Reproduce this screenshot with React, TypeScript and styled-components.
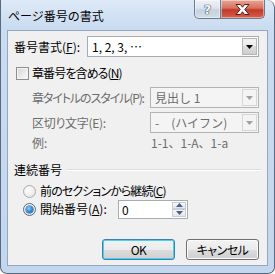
import React from 'react';
import styled, { createGlobalStyle } from 'styled-components';

const Global = createGlobalStyle`
  html, body { margin: 0; padding: 0; background: #ffffff; }
  body {
    font-family: "Noto Sans CJK JP", "Noto Sans", sans-serif;
    font-size: 12px;
    color: #000;
  }
`;

const Window = styled.div`
  width: 275px;
  height: 274px;
  box-sizing: border-box;
  background: linear-gradient(180deg, #dde9f6 0px, #cadcf1 28px, #c2d6ee 100%);
  border: 1px solid #5a6a7e;
  border-top: none;
  border-radius: 0 8px 7px 7px;
  display: flex;
  flex-direction: column;
  padding: 0 6px 7px 6px;
  overflow: hidden;
`;

const TitleBar = styled.div`
  height: 30px;
  display: flex;
  align-items: flex-start;
  flex: none;
`;

const Title = styled.div`
  font-size: 12px;
  line-height: 16px;
  margin: 8px 0 0 1px;
  color: #000;
`;

const Captions = styled.div`
  margin-left: auto;
  margin-right: 3px;
  display: flex;
`;

const CaptionButton = styled.div<{ $close?: boolean }>`
  height: 19px;
  width: ${p => (p.$close ? '44px' : '27px')};
  box-sizing: border-box;
  border: 1px solid #6d7a8c;
  border-top: none;
  display: flex;
  align-items: center;
  justify-content: center;
  border-radius: ${p => (p.$close ? '0 0 5px 0' : '0 0 0 5px')};
  border-left: ${p => (p.$close ? 'none' : '1px solid #6d7a8c')};
  background: ${p =>
    p.$close
      ? 'linear-gradient(180deg, #e9a596 0%, #d7705f 45%, #c3392a 55%, #d65f4c 100%)'
      : 'linear-gradient(180deg, #eef2f7 0%, #dce4ee 45%, #c6d2e0 55%, #d3dde9 100%)'};
  box-shadow: inset 0 0 0 1px rgba(255,255,255,0.45);
`;

const HelpGlyph = styled.span`
  font-family: "DejaVu Sans", sans-serif;
  font-weight: bold;
  font-size: 13px;
  line-height: 13px;
  color: #f6f8fb;
  text-shadow: 0 0 1px #3c4a5c, 0 0 1px #3c4a5c, 0 0 1px #3c4a5c;
`;

const Client = styled.div`
  flex: 1;
  background: #f0f0f0;
  border: 1px solid #95a8c0;
  display: flex;
  flex-direction: column;
  padding: 5px 8px 5px 6px;
`;

const Row = styled.div<{ $top?: number; $h?: number; $indent?: number }>`
  display: flex;
  align-items: center;
  height: ${p => p.$h ?? 21}px;
  margin-top: ${p => p.$top ?? 0}px;
  padding-left: ${p => p.$indent ?? 0}px;
`;

const Label = styled.span<{ $w?: number; $disabled?: boolean; $ls?: number }>`
  font-feature-settings: "palt";
  line-height: 16px;
  white-space: nowrap;
  letter-spacing: ${p => p.$ls ?? 0}px;
  width: ${p => (p.$w ? `${p.$w}px` : 'auto')};
  flex: none;
  color: ${p => (p.$disabled ? '#6d6d6d' : '#000')};
`;

const Acc = styled.span`
  text-decoration: underline;
  text-underline-offset: 1px;
`;

const Combo = styled.div<{ $disabled?: boolean; $w?: number }>`
  margin-left: auto;
  width: ${p => p.$w ?? 172}px;
  height: 21px;
  box-sizing: border-box;
  border: 1px solid ${p => (p.$disabled ? '#b4b4b4' : '#a4acb6')};
  background: ${p => (p.$disabled ? '#f4f4f4' : '#ffffff')};
  display: flex;
  align-items: center;
  padding: 1px;
`;

const ComboText = styled.span<{ $disabled?: boolean }>`
  flex: 1;
  padding-left: 3px;
  line-height: 16px;
  white-space: nowrap;
  color: ${p => (p.$disabled ? '#6d6d6d' : '#000')};
`;

const DropButton = styled.div<{ $disabled?: boolean }>`
  width: 15px;
  height: 17px;
  box-sizing: border-box;
  border: 1px solid ${p => (p.$disabled ? '#d6d6d6' : '#b5b5b5')};
  background: ${p =>
    p.$disabled
      ? '#f4f4f4'
      : 'linear-gradient(180deg, #f3f3f3 0%, #ebebeb 50%, #dcdcdc 50%, #cfcfcf 100%)'};
  display: flex;
  align-items: center;
  justify-content: center;
`;

const Check = styled.div`
  width: 13px;
  height: 13px;
  box-sizing: border-box;
  border: 1px solid #8e8f8f;
  background: linear-gradient(135deg, #d6d6d6 0%, #ececec 60%, #f9f9f9 100%);
  box-shadow: inset 0 0 0 1px #f4f4f4;
  margin: 0 3px 0 1px;
  flex: none;
`;

const Radio = styled.div<{ $on?: boolean }>`
  width: 13px;
  height: 13px;
  box-sizing: border-box;
  border-radius: 50%;
  border: 1px solid ${p => (p.$on ? '#56698a' : '#acacac')};
  background: radial-gradient(circle at 40% 35%, #ffffff 0%, #ececec 60%, #d8d8d8 100%);
  display: flex;
  align-items: center;
  justify-content: center;
  margin-right: 4px;
  flex: none;
`;

const RadioDot = styled.div`
  width: 7px;
  height: 7px;
  border-radius: 50%;
  background: radial-gradient(circle at 40% 35%, #8fd3ff 0%, #2d8ee0 50%, #0f4e9a 100%);
  box-shadow: 0 0 0 0.5px #1d3f6e;
`;

const Example = styled.span`
  margin-left: auto;
  width: 108px;
  color: #6d6d6d;
  line-height: 16px;
  white-space: nowrap;
`;

const GroupHeader = styled.div`
  display: flex;
  align-items: center;
  height: 16px;
  margin-top: 11px;
  gap: 4px;
`;

const GroupLine = styled.div`
  flex: 1;
  height: 0;
  border-top: 1px solid #d5dfe5;
  border-bottom: 1px solid #ffffff;
  margin-right: -3px;
`;

const SpinBox = styled.div`
  width: 70px;
  height: 19px;
  box-sizing: border-box;
  border: 1px solid #a4acb6;
  background: #fff;
  display: flex;
  align-items: stretch;
  padding: 1px;
`;

const SpinText = styled.span`
  flex: 1;
  padding-left: 2px;
  line-height: 15px;
`;

const SpinButtons = styled.div`
  width: 14px;
  display: flex;
  flex-direction: column;
`;

const SpinHalf = styled.div`
  flex: 1;
  box-sizing: border-box;
  border: 1px solid #c9ced6;
  background: linear-gradient(180deg, #f6f7f9, #e3e6ea);
  display: flex;
  align-items: center;
  justify-content: center;
`;

const Footer = styled.div`
  margin-top: auto;
  display: flex;
  justify-content: flex-end;
  gap: 11px;
`;

const Button = styled.div<{ $default?: boolean }>`
  width: 73px;
  height: 21px;
  box-sizing: border-box;
  border: 1px solid ${p => (p.$default ? '#3c7fb1' : '#707070')};
  border-radius: 3px;
  background: linear-gradient(180deg, #f2f2f2 0%, #ebebeb 50%, #dddddd 50%, #cfcfcf 100%);
  box-shadow: inset 0 0 0 1px ${p => (p.$default ? '#48d0f8' : '#fcfcfc')};
  display: flex;
  align-items: center;
  justify-content: center;
  font-feature-settings: "palt";
  letter-spacing: -0.5px;
  line-height: 16px;
`;

const Tri = ({ up, color }: { up?: boolean; color: string }) => (
  <svg width="7" height="4" viewBox="0 0 7 4">
    <path d={up ? 'M0 4 L3.5 0 L7 4 Z' : 'M0 0 L7 0 L3.5 4 Z'} fill={color} />
  </svg>
);

const CloseX = () => (
  <svg width="17" height="13" viewBox="0 0 17 13">
    <path
      d="M2 1.5 L6.5 1.5 L8.5 4.2 L10.5 1.5 L15 1.5 L10.8 6.5 L15 11.5 L10.5 11.5 L8.5 8.8 L6.5 11.5 L2 11.5 L6.2 6.5 Z"
      fill="#ffffff"
      stroke="#5b1d17"
      strokeWidth="1"
      strokeLinejoin="round"
    />
  </svg>
);

export default function App() {
  return (
    <>
      <Global />
      <Window>
        <TitleBar>
          <Title>ページ番号の書式</Title>
          <Captions>
            <CaptionButton>
              <HelpGlyph>?</HelpGlyph>
            </CaptionButton>
            <CaptionButton $close>
              <CloseX />
            </CaptionButton>
          </Captions>
        </TitleBar>
        <Client>
          <Row>
            <Label $w={73}>
              番号書式(<Acc>F</Acc>):
            </Label>
            <Combo>
              <ComboText>1, 2, 3, …</ComboText>
              <DropButton>
                <Tri color="#000" />
              </DropButton>
            </Combo>
          </Row>
          <Row $top={8} $h={16} $indent={1}>
            <Check />
            <Label $ls={-0.9}>
              章番号を含める(<Acc>N</Acc>)
            </Label>
          </Row>
          <Row $top={6} $indent={18}>
            <Label $disabled $ls={-1.1}>章タイトルのスタイル(P):</Label>
            <Combo $disabled $w={109}>
              <ComboText $disabled>見出し 1</ComboText>
              <DropButton $disabled>
                <Tri color="#a0a0a0" />
              </DropButton>
            </Combo>
          </Row>
          <Row $top={4} $indent={18}>
            <Label $disabled $ls={-0.3}>区切り文字(E):</Label>
            <Combo $disabled $w={109}>
              <ComboText $disabled>-　(ハイフン)</ComboText>
              <DropButton $disabled>
                <Tri color="#a0a0a0" />
              </DropButton>
            </Combo>
          </Row>
          <Row $top={2} $h={16} $indent={18}>
            <Label $disabled>例:</Label>
            <Example>1-1、1-A、1-a</Example>
          </Row>
          <GroupHeader>
            <Label>連続番号</Label>
            <GroupLine />
          </GroupHeader>
          <Row $top={5} $h={16} $indent={9}>
            <Radio />
            <Label $ls={-0.9}>
              前のセクションから継続(<Acc>C</Acc>)
            </Label>
          </Row>
          <Row $h={20} $indent={9}>
            <Radio $on>
              <RadioDot />
            </Radio>
            <Label $w={78}>
              開始番号(<Acc>A</Acc>):
            </Label>
            <SpinBox>
              <SpinText>0</SpinText>
              <SpinButtons>
                <SpinHalf>
                  <Tri up color="#4d6185" />
                </SpinHalf>
                <SpinHalf>
                  <Tri color="#4d6185" />
                </SpinHalf>
              </SpinButtons>
            </SpinBox>
          </Row>
          <Footer>
            <Button $default>OK</Button>
            <Button>キャンセル</Button>
          </Footer>
        </Client>
      </Window>
    </>
  );
}
